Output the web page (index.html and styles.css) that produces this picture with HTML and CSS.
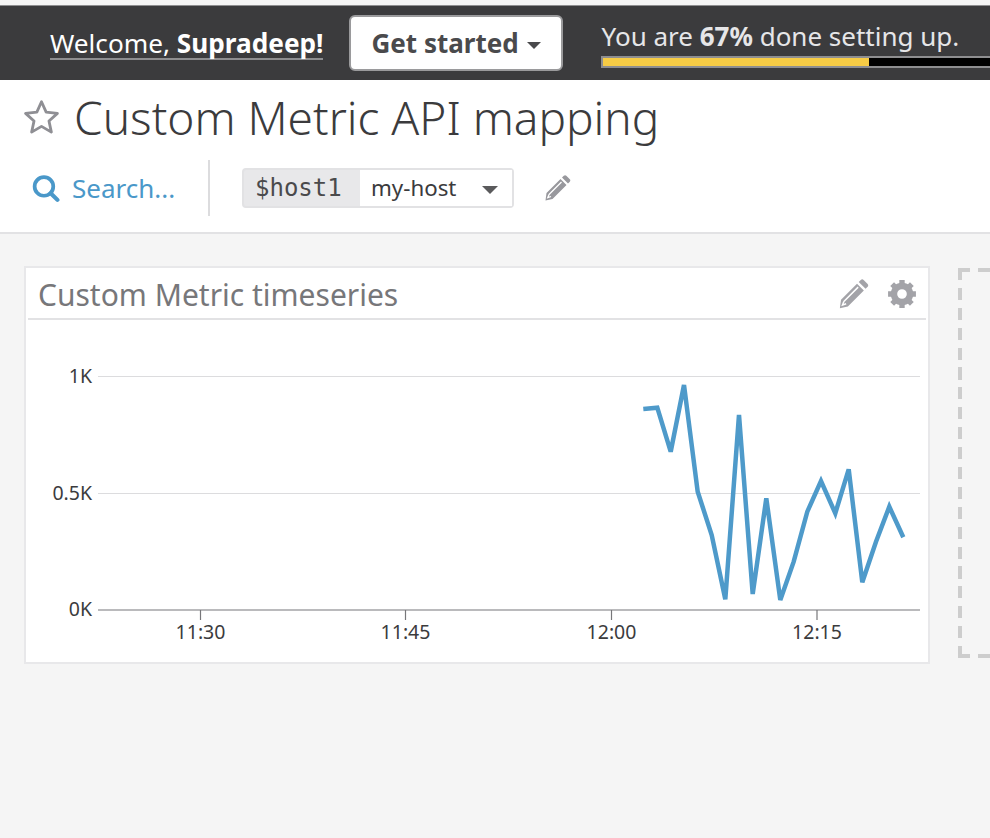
FILE: index.html
```html
<!DOCTYPE html>
<html lang="en">
<head>
    <meta charset="UTF-8">
    <meta name="viewport" content="width=device-width, initial-scale=1.0">
    <title>Custom Metric API mapping</title>
    <link rel="stylesheet" href="styles.css">
</head>
<body>

    <div class="setup-bar">
        <span class="welcome">Welcome, <b>Supradeep!</b></span>
        <button class="get-started">Get started <span class="caret caret-dark"></span></button>
        <div class="progress-box">
            <div class="progress-text">You are <b>67%</b> done setting up.</div>
            <div class="progress-track"><div class="progress-fill"></div></div>
        </div>
    </div>

    <div class="page-head">
        <div class="title-row">
            <svg class="star" viewBox="0 0 36 36" width="39" height="39">
                <path d="M18 3.500l4.300 9.600 10.400 1.100-7.800 7 2.200 10.300L18 26.200 8.900 31.500l2.200-10.300-7.800-7 10.400-1.100z" fill="none" stroke="#8f8f94" stroke-width="2.600" stroke-linejoin="round"/>
            </svg>
            <h1>Custom Metric API mapping</h1>
        </div>
        <div class="tool-row">
            <div class="search">
                <svg viewBox="0 0 28 28" width="29" height="29">
                    <circle cx="12.500" cy="12" r="9" fill="none" stroke="#4a98c9" stroke-width="3.600"/>
                    <path d="M19 18.500l6.500 6.500" stroke="#4a98c9" stroke-width="4" stroke-linecap="round"/>
                </svg>
                <span>Search...</span>
            </div>
            <div class="divider"></div>
            <div class="var-picker">
                <span class="var-name">$host1</span>
                <span class="var-value">my-host <span class="caret caret-gray"></span></span>
            </div>
            <svg class="pencil" viewBox="0 0 28 28" width="28" height="28">
                <path d="M3.500 19L17.500 5l6 6-14 14-7 1.500z M19 3.500l1.800-1.800c.8-.7 1.800-.7 2.500 0l3.500 3.500c.7.700.7 1.700 0 2.500L25 9.500z" fill="#98989d"/>
                <path d="M6 20.500L18.500 8M6 20.500l-1.200 3.200 3.200-1.200" fill="none" stroke="#fff" stroke-width="1.300"/>
            </svg>
        </div>
    </div>

    <div class="board">
        <div class="card">
            <div class="card-head">
                <span class="card-title">Custom Metric timeseries</span>
                <div class="card-icons">
                    <svg viewBox="0 0 28 28" width="32" height="32">
                        <path d="M3.500 19L17.500 5l6 6-14 14-7 1.500z M19 3.500l1.800-1.800c.8-.7 1.800-.7 2.500 0l3.500 3.500c.7.700.7 1.700 0 2.500L25 9.500z" fill="#a3a3a8"/>
                        <path d="M6 20.500L18.500 8M6 20.500l-1.200 3.200 3.200-1.200" fill="none" stroke="#fff" stroke-width="1.300"/>
                    </svg>
                    <svg viewBox="0 0 28 28" width="30" height="30">
                        <circle cx="14" cy="14" r="7.500" fill="none" stroke="#a3a3a8" stroke-width="6"/>
                        <path d="M14 1v26M1 14h26M4.800 4.800l18.400 18.400M23.200 4.800L4.800 23.200" stroke="#a3a3a8" stroke-width="5" stroke-dasharray="5 16"/>
                    </svg>
                </div>
            </div>
            <svg class="chart" viewBox="26 320 902 342" width="902" height="342">
                <line class="grid" x1="98" y1="376.500" x2="920" y2="376.500"/>
                <line class="grid" x1="98" y1="493.500" x2="920" y2="493.500"/>
                <line class="axis" x1="98" y1="610" x2="920" y2="610"/>
                <line class="axis" x1="200.500" y1="610" x2="200.500" y2="620"/>
                <line class="axis" x1="405.500" y1="610" x2="405.500" y2="620"/>
                <line class="axis" x1="611.500" y1="610" x2="611.500" y2="620"/>
                <line class="axis" x1="817" y1="610" x2="817" y2="620"/>
                <text class="y-label" x="92" y="383">1K</text>
                <text class="y-label" x="92" y="500">0.5K</text>
                <text class="y-label" x="92" y="616">0K</text>
                <text class="x-label" x="200.500" y="639">11:30</text>
                <text class="x-label" x="405.500" y="639">11:45</text>
                <text class="x-label" x="611.500" y="639">12:00</text>
                <text class="x-label" x="817" y="639">12:15</text>
                <polyline class="series" points="643.300,409 657.300,407.700 670.700,451.700 684,385 697.700,491.700 711.700,535 725.300,599.300 739,415 752.700,594 766.300,498.300 780.300,600 793.700,561.700 807.300,511.700 821,481 835.300,513.300 848.700,469.300 862.300,582.300 876,541.700 889.300,506.700 903.300,537.300"/>
            </svg>
        </div>
        <div class="drop-zone"></div>
    </div>

</body>
</html>
```

FILE: styles.css
```css
html, body {
    height: 100%;
}

body {
    margin: 0;
    overflow: hidden;
    font-family: "Noto Sans", "Open Sans", sans-serif;
    background-color: #f5f5f5;
    display: flex;
    flex-direction: column;
}

/* setup bar */
.setup-bar {
    margin-top: 5px;
    height: 75px;
    box-sizing: border-box;
    border-top: 1px solid #8e8e90;
    background-color: #3b3b3d;
    display: flex;
    align-items: center;
    padding-left: 50px;
    flex-shrink: 0;
}

.welcome {
    color: #fff;
    font-size: 26.200px;
    line-height: 30px;
    border-bottom: 2px solid #8e8e90;
    margin-top: 1px;
    white-space: nowrap;
}

.get-started {
    margin-left: 26px;
    height: 56px;
    width: 214px;
    padding: 0;
    border: 2px solid #9a9a9c;
    border-radius: 6px;
    background-color: #fff;
    color: #4a4a4c;
    font-family: inherit;
    font-size: 26px;
    font-weight: 700;
    white-space: nowrap;
}

.caret {
    display: inline-block;
    width: 0;
    height: 0;
    vertical-align: middle;
    border-left: 7px solid transparent;
    border-right: 7px solid transparent;
}

.caret-dark {
    border-top: 7px solid #4a4a4c;
    margin-left: 2px;
}

.caret-gray {
    border-left-width: 8px;
    border-right-width: 8px;
    border-top: 8px solid #5a5a5c;
    margin-left: 20px;
}

.progress-box {
    margin-left: 38px;
    flex: 1;
    margin-top: 1px;
}

.progress-text {
    color: #e6e6e8;
    font-size: 26px;
    line-height: 34px;
    white-space: nowrap;
}

.progress-track {
    height: 12px;
    box-sizing: border-box;
    border: 2px solid #8e8e90;
    border-right: none;
    background-color: #000;
    margin-top: 3px;
}

.progress-fill {
    width: 266px;
    height: 100%;
    background-color: #f6cb45;
}

/* title and toolbar */
.page-head {
    height: 154px;
    box-sizing: border-box;
    background-color: #fff;
    border-bottom: 2px solid #e2e2e4;
    flex-shrink: 0;
}

.title-row {
    display: flex;
    align-items: center;
    height: 74px;
    padding-left: 22px;
}

.star {
    margin-right: 13px;
}

h1 {
    margin: 0;
    font-size: 46px;
    font-weight: 300;
    color: #3b3b3d;
    white-space: nowrap;
}

.tool-row {
    display: flex;
    align-items: center;
    height: 56px;
    margin-top: 6px;
}

.search {
    display: flex;
    align-items: center;
    gap: 12px;
    width: 177px;
    margin-left: 31px;
    color: #4a98c9;
    font-size: 26px;
}

.divider {
    width: 2px;
    height: 56px;
    background-color: #dcdcde;
}

.var-picker {
    display: flex;
    height: 40px;
    margin-left: 32px;
    background-color: #e8e8ea;
    border-radius: 4px;
    box-sizing: border-box;
    border: 2px solid #e2e2e4;
    width: 272px;
}

.var-name {
    width: 116px;
    padding-left: 11px;
    box-sizing: border-box;
    font-family: "DejaVu Sans Mono", "Liberation Mono", monospace;
    font-size: 24px;
    line-height: 36px;
    color: #4a4a4c;
}

.var-value {
    flex: 1;
    background-color: #fff;
    padding-left: 11px;
    font-size: 22.300px;
    line-height: 35px;
    color: #3b3b3d;
    white-space: nowrap;
}

.pencil {
    margin-left: 29px;
}

/* dashboard */
.board {
    display: flex;
    align-items: flex-start;
    padding: 32px 0 0 24px;
    gap: 28px;
}

.card {
    width: 906px;
    height: 398px;
    box-sizing: border-box;
    flex-shrink: 0;
    border: 2px solid #e8e8ea;
    background-color: #fff;
}

.card-head {
    height: 52px;
    margin: 0 2px;
    box-sizing: border-box;
    border-bottom: 2px solid #e2e2e4;
    display: flex;
    align-items: center;
    justify-content: space-between;
    padding: 2px 9px 0 10px;
}

.card-title {
    font-size: 30px;
    color: #77777a;
    white-space: nowrap;
}

.card-icons {
    display: flex;
    align-items: center;
    gap: 18px;
}

.chart {
    display: block;
}

.grid {
    stroke: #dcdcde;
    stroke-width: 1;
}

.axis {
    stroke: #77777a;
    stroke-width: 1.200;
}

.y-label, .x-label {
    font-size: 19.500px;
    fill: #3b3b3d;
}

.y-label {
    text-anchor: end;
}

.x-label {
    text-anchor: middle;
}

.series {
    fill: none;
    stroke: #4e9aca;
    stroke-width: 4.500;
}

/* 12px dashes, wider than a css dashed border gives */
.drop-zone {
    flex: 1;
    height: 390px;
    margin-top: 2px;
    background:
        repeating-linear-gradient(90deg, #cdcdcd 0 12px, transparent 12px 20px) top left / 100% 4px no-repeat,
        repeating-linear-gradient(90deg, #cdcdcd 0 12px, transparent 12px 20px) bottom left / 100% 4px no-repeat,
        repeating-linear-gradient(180deg, #cdcdcd 0 12px, transparent 12px 19.900px) top left / 4px 100% no-repeat;
}
```
